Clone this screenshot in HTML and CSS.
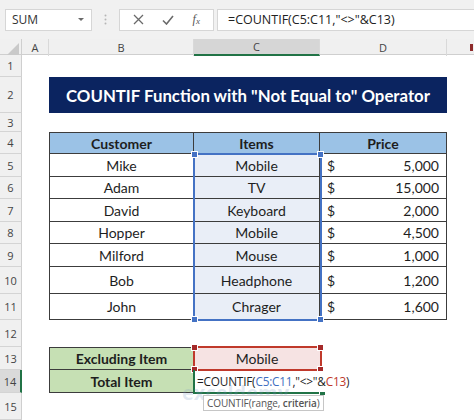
FILE: index.html
```html
<!DOCTYPE html>
<html lang="en">
<head>
    <meta charset="UTF-8">
    <title>COUNTIF Not Equal to</title>
    <link rel="stylesheet" href="styles.css">
</head>
<body>
    <div class="toolbar">
        <div class="namebox">
            <span>SUM</span>
            <svg width="8" height="5" viewBox="0 0 8 5"><path d="M1 1h6L4 4z" fill="#6a6a6a"/></svg>
        </div>
        <div class="grip">
            <svg width="3" height="11" viewBox="0 0 3 11"><circle cx="1.5" cy="1.5" r="1" fill="#b5b5b5"/><circle cx="1.5" cy="5.5" r="1" fill="#b5b5b5"/><circle cx="1.5" cy="9.5" r="1" fill="#b5b5b5"/></svg>
        </div>
        <div class="fx-buttons">
            <svg width="11" height="11" viewBox="0 0 11 11"><path d="M1 1l9 9M10 1l-9 9" stroke="#6a6a6a" stroke-width="1.3"/></svg>
            <svg width="12" height="10" viewBox="0 0 12 10"><path d="M1 5.5l3.5 3.5L11 1" stroke="#6a6a6a" stroke-width="1.6" fill="none"/></svg>
            <span class="fx">f<sub>x</sub></span>
        </div>
        <div class="formula">=COUNTIF(C5:C11,"&lt;&gt;"&amp;C13)</div>
    </div>

    <div class="sheet">
        <div class="row head">
            <div class="corner"><svg width="12" height="12" viewBox="0 0 12 12"><path d="M12 0v12H0z" fill="#c9c9c9"/></svg></div>
            <div class="ch">A</div>
            <div class="ch">B</div>
            <div class="ch sel">C</div>
            <div class="ch">D</div>
            <div class="ch e"><span class="mark"></span></div>
        </div>

        <div class="row h22"><div class="rh">1</div></div>
        <div class="row h36">
            <div class="rh">2</div>
            <div></div>
            <div class="title">COUNTIF Function with "Not Equal to" Operator</div>
        </div>
        <div class="row h19"><div class="rh">3</div></div>
        <div class="row h22">
            <div class="rh">4</div><div></div>
            <div class="c th tl">Customer</div>
            <div class="c th">Items</div>
            <div class="c th">Price</div>
        </div>
        <div class="row h23">
            <div class="rh">5</div><div></div>
            <div class="c tl">Mike</div><div class="c item">Mobile</div>
            <div class="c price"><span>$</span><span>5,000</span></div>
        </div>
        <div class="row h22">
            <div class="rh">6</div><div></div>
            <div class="c tl">Adam</div><div class="c item">TV</div>
            <div class="c price"><span>$</span><span>15,000</span></div>
        </div>
        <div class="row h23">
            <div class="rh">7</div><div></div>
            <div class="c tl">David</div><div class="c item">Keyboard</div>
            <div class="c price"><span>$</span><span>2,000</span></div>
        </div>
        <div class="row h22">
            <div class="rh">8</div><div></div>
            <div class="c tl">Hopper</div><div class="c item">Mobile</div>
            <div class="c price"><span>$</span><span>4,500</span></div>
        </div>
        <div class="row h23">
            <div class="rh">9</div><div></div>
            <div class="c tl">Milford</div><div class="c item">Mouse</div>
            <div class="c price"><span>$</span><span>1,000</span></div>
        </div>
        <div class="row h27">
            <div class="rh">10</div><div></div>
            <div class="c tl">Bob</div><div class="c item">Headphone</div>
            <div class="c price"><span>$</span><span>1,200</span></div>
        </div>
        <div class="row h26">
            <div class="rh">11</div><div></div>
            <div class="c tl">John</div><div class="c item">Chrager</div>
            <div class="c price"><span>$</span><span>1,600</span></div>
        </div>
        <div class="row h27"><div class="rh">12</div></div>
        <div class="row h23">
            <div class="rh">13</div><div></div>
            <div class="c label top">Excluding Item</div>
            <div class="c pick">Mobile</div>
        </div>
        <div class="row h23">
            <div class="rh active">14</div><div></div>
            <div class="c label">Total Item</div>
            <div class="c"></div>
        </div>
        <div class="row h27"><div class="rh">15</div></div>

        <!-- range highlights drawn over the grid -->
        <div class="range blue">
            <i class="hd tl-h"></i><i class="hd tr-h"></i><i class="hd bl-h"></i><i class="hd br-h"></i>
        </div>
        <div class="range red">
            <i class="hd tl-h"></i><i class="hd tr-h"></i><i class="hd bl-h"></i><i class="hd br-h"></i>
        </div>
        <div class="range green"><i class="hd br-h"></i></div>
        <div class="editor">=COUNTIF(<span class="ref-b">C5:C11</span>,"&lt;&gt;"&amp;<span class="ref-r">C13</span>)</div>
        <div class="watermark">exceldemy</div>
        <div class="tip">COUNTIF(range, <b>criteria</b>)</div>
    </div>
</body>
</html>
```

FILE: styles.css
```css
:root {
    --grid-line: #d4d4d4;
    --head-bg: #f0f0f0;
    --border: #3c3c3c;
    --navy: #0b2460;
    --blue: #4472c4;
    --red: #c0392b;
    --green: #217346;
}

body {
    margin: 0;
    width: 474px;
    height: 420px;
    overflow: hidden;
    background: #ffffff;
    font-family: Lato, "Open Sans", sans-serif;
    color: #1e1e1e;
}

/* formula bar */
.toolbar {
    display: flex;
    align-items: center;
    height: 39px;
    padding-left: 5px;
    background: #f1f1f1;
    box-sizing: border-box;
    font-family: "Open Sans", "Noto Sans", sans-serif;
}

.namebox {
    display: flex;
    align-items: center;
    justify-content: space-between;
    width: 87px;
    height: 22px;
    padding: 0 6px 0 6px;
    box-sizing: border-box;
    background: #ffffff;
    border: 1px solid #d6d6d6;
    font-size: 12px;
    color: #333;
}

.grip {
    display: flex;
    justify-content: center;
    width: 27px;
}

.fx-buttons {
    display: flex;
    align-items: center;
    justify-content: space-around;
    width: 95px;
    height: 22px;
    padding: 0 4px;
    box-sizing: border-box;
    background: #ffffff;
    border: 1px solid #d6d6d6;
}

.fx {
    font-family: "Liberation Serif", serif;
    font-style: italic;
    font-size: 12px;
    color: #555;
}

.fx sub {
    font-size: 9px;
    vertical-align: -1px;
}

.formula {
    flex: 1;
    height: 22px;
    margin-left: 3px;
    padding-left: 10px;
    box-sizing: border-box;
    background: #ffffff;
    border: 1px solid #d6d6d6;
    border-right: none;
    font-size: 12.5px;
    line-height: 20px;
    color: #222;
}

/* sheet grid */
.sheet {
    position: relative;
}

.row {
    display: grid;
    grid-template-columns: 22px 27px 145px 126px 127px 1fr;
    height: 22px;
}

.h19 { height: 19px; }
.h22 { height: 22px; }
.h23 { height: 23px; }
.h26 { height: 26px; }
.h27 { height: 27px; }
.h36 { height: 36px; }

.row.head {
    height: 16px;
    background: var(--head-bg);
    border-bottom: 1px solid #cfcfcf;
    box-sizing: border-box;
}

.corner {
    display: flex;
    align-items: flex-end;
    justify-content: flex-end;
    padding: 0 2px 1px 0;
    border-right: 1px solid #cfcfcf;
}

.ch {
    display: flex;
    align-items: center;
    justify-content: center;
    border-right: 1px solid #d9d9d9;
    font-family: "Open Sans", sans-serif;
    font-size: 11px;
    color: #444;
}

.ch.sel {
    background: #d6d6d6;
    border-bottom: 2px solid var(--green);
}

.ch.e {
    justify-content: flex-end;
    border-right: none;
}

.mark {
    width: 3px;
    height: 7px;
    margin-right: 1px;
    background: #8e2b2b;
}

.rh {
    display: flex;
    align-items: center;
    justify-content: center;
    background: var(--head-bg);
    border-right: 1px solid #cfcfcf;
    border-bottom: 1px solid var(--grid-line);
    font-family: "Open Sans", sans-serif;
    font-size: 11px;
    color: #444;
}

.rh.active {
    background: #dadada;
    border-right: 2px solid var(--green);
}

.title {
    grid-column: 3 / 6;
    display: flex;
    align-items: center;
    justify-content: center;
    background: var(--navy);
    color: #ffffff;
    font-weight: 700;
    font-size: 16.8px;
}

.c {
    display: flex;
    align-items: center;
    justify-content: center;
    border-right: 1px solid var(--border);
    border-bottom: 1px solid var(--border);
    font-size: 14px;
}

.c.tl {
    border-left: 1px solid var(--border);
}

.c.th {
    background: #9bc2e6;
    border-top: 1px solid var(--border);
    font-weight: 700;
}

.c.item {
    background: #e9eef7;
}

.c.price {
    justify-content: space-between;
    padding: 0 7px;
}

.c.label {
    background: #c6e0b4;
    border-left: 1px solid var(--border);
    font-weight: 700;
}

.c.label.top {
    border-top: 1px solid var(--border);
}

.c.pick {
    background: #f6e3e3;
    border: none;
}

/* overlays */
.range {
    position: absolute;
    box-sizing: border-box;
}

.range.blue {
    left: 193px;
    top: 114px;
    width: 129px;
    height: 168px;
    border: 2px solid var(--blue);
}

.range.red {
    left: 193px;
    top: 307px;
    width: 129px;
    height: 25px;
    border: 2px solid var(--red);
}

.range.green {
    left: 193px;
    top: 331px;
    width: 129px;
    height: 24px;
    border-left: 2px solid var(--green);
    border-bottom: 2px solid var(--green);
}

.hd {
    position: absolute;
    width: 5px;
    height: 5px;
    background: var(--blue);
    border: 1px solid #ffffff;
}

.red .hd {
    background: #a52a2a;
}

.green .hd {
    background: var(--green);
}

.tl-h { left: -4px; top: -4px; }
.tr-h { right: -4px; top: -4px; }
.bl-h { left: -4px; bottom: -4px; }
.br-h { right: -4px; bottom: -4px; }

.editor {
    position: absolute;
    left: 195px;
    top: 332px;
    height: 21px;
    padding: 0 2px;
    background: #ffffff;
    font-family: "Open Sans", sans-serif;
    font-size: 11.8px;
    letter-spacing: -0.2px;
    line-height: 21px;
    white-space: nowrap;
}

.ref-b { color: #3f6fc1; }
.ref-r { color: #c0392b; }

.watermark {
    position: absolute;
    left: 182px;
    top: 340px;
    font-family: "Open Sans", sans-serif;
    font-size: 20px;
    font-weight: 700;
    color: rgba(120, 150, 195, 0.22);
}

.tip {
    position: absolute;
    left: 203px;
    top: 356px;
    padding: 0 3px;
    height: 16px;
    line-height: 15px;
    box-sizing: border-box;
    background: #ffffff;
    border: 1px solid #c6c6c6;
    font-family: "Open Sans", sans-serif;
    font-size: 10px;
    letter-spacing: -0.1px;
    color: #555;
    white-space: nowrap;
}

.tip b {
    font-weight: 600;
}
```
